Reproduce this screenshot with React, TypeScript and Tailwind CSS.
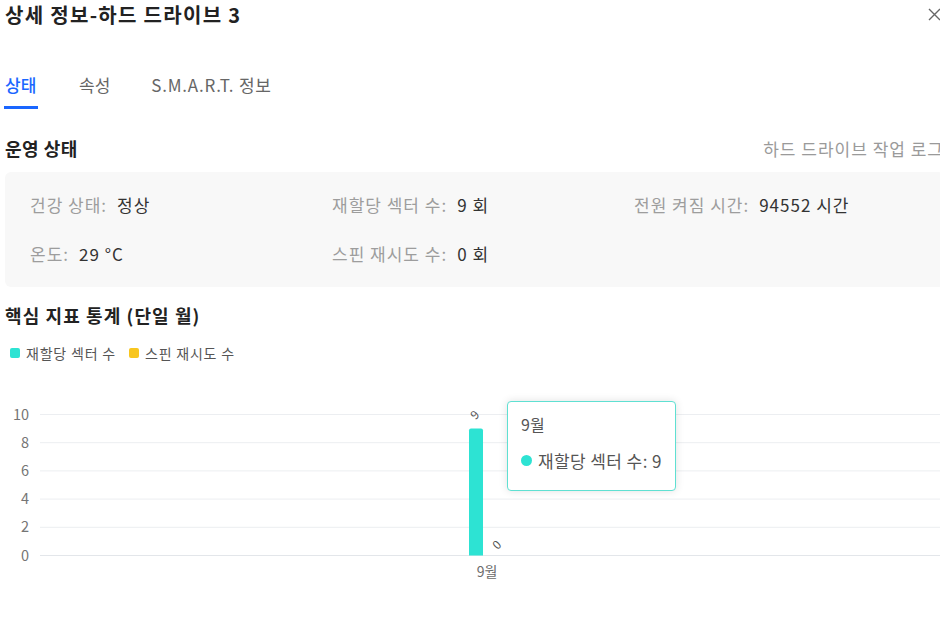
import React from "react";

const TEAL = "#2de3d3";
const YELLOW = "#f8c61f";

function Chart() {
  const x0 = 40;
  const x1 = 944;
  const yTop = 414.5;
  const step = 28.2;
  const ticks = [10, 8, 6, 4, 2, 0];
  const yOf = (v: number) => yTop + ((10 - v) / 2) * step;
  const base = yOf(0);
  const barTop = yOf(9);
  return (
    <svg width="944" height="200" viewBox="0 390 944 200" className="block">
      {ticks.map((t) => (
        <g key={t}>
          <line x1={x0} x2={x1} y1={yOf(t)} y2={yOf(t)} stroke={t === 0 ? "#e3e6ea" : "#eceef1"} strokeWidth="1" />
          <text x={29} y={yOf(t) + 5} textAnchor="end" fontSize="14.5" fill="#757575">
            {t}
          </text>
        </g>
      ))}
      <path
        d={`M469 ${base} L469 ${barTop + 2} Q469 ${barTop} 471 ${barTop} L481 ${barTop} Q483 ${barTop} 483 ${barTop + 2} L483 ${base} Z`}
        fill={TEAL}
      />
      <text x={475} y={419} fontSize="12" fill="#555" textAnchor="middle" transform="rotate(-45 475 415)">
        9
      </text>
      <text x={497} y={549} fontSize="12" fill="#555" textAnchor="middle" transform="rotate(-45 497 545)">
        0
      </text>
      <text x={487} y={577} fontSize="14" fill="#6b6b6b" textAnchor="middle">
        9월
      </text>
    </svg>
  );
}

function Item({ label, value }: { label: string; value: string }) {
  return (
    <div className="flex">
      <span className="text-[#9d9d9d]">{label}</span>
      <span className="ml-[10px] text-[#333]">{value}</span>
    </div>
  );
}

export default function App() {
  return (
    <div className="w-[940px] h-[630px] overflow-hidden bg-white font-['Noto_Sans_CJK_KR','Noto_Sans',sans-serif]">
      <div className="relative w-[944px] pl-[5px]">
        {/* Header */}
        <div className="flex h-[30px] items-center justify-between">
          <div className="text-[20px] font-bold tracking-[1.3px] text-[#222] leading-none">상세 정보-하드 드라이브 3</div>
          <svg width="13" height="13" viewBox="0 0 13 13" className="mr-[3px] -mt-[1px]">
            <path d="M1 1 L12 12 M12 1 L1 12" stroke="#666" strokeWidth="1.4" />
          </svg>
        </div>

        {/* Tabs */}
        <div className="mt-[46px] flex gap-[41px] text-[17px] leading-none">
          <div className="flex flex-col">
            <span className="text-[#1a66ff] font-medium">상태</span>
            <span className="mt-[13px] h-[3px] w-[34px] -ml-[1px] bg-[#1a66ff]" />
          </div>
          <span className="text-[#666]">속성</span>
          <span className="text-[#666] tracking-[0.8px]">S.M.A.R.T. 정보</span>
        </div>

        {/* Section header */}
        <div className="mt-[30px] flex items-center justify-between">
          <div className="text-[18px] font-bold tracking-[0.5px] text-[#222] leading-none">운영 상태</div>
          <div className="text-[17px] tracking-[1px] text-[#9a9a9a] leading-none">하드 드라이브 작업 로그</div>
        </div>

        {/* Status box */}
        <div className="mt-[15px] h-[115px] rounded-md bg-[#f8f8f8] pl-[25px] pt-[21px]">
          <div className="grid grid-cols-[302px_302px_302px] gap-y-[26px] text-[17px] tracking-[1px] leading-[23px]">
            <Item label="건강 상태:" value="정상" />
            <Item label="재할당 섹터 수:" value="9 회" />
            <Item label="전원 켜짐 시간:" value="94552 시간" />
            <Item label="온도:" value="29 °C" />
            <Item label="스핀 재시도 수:" value="0 회" />
            <div />
          </div>
        </div>

        {/* Metrics header */}
        <div className="mt-[19px] text-[18px] font-bold tracking-[1.1px] text-[#222] leading-none">핵심 지표 통계 (단일 월)</div>

        {/* Legend */}
        <div className="mt-[22px] flex items-center pl-[5px] text-[14px] tracking-[0.8px] text-[#555] leading-none">
          <span className="h-[10px] w-[10px] rounded-[2px]" style={{ background: TEAL }} />
          <span className="ml-[6px]">재할당 섹터 수</span>
          <span className="ml-[13px] h-[10px] w-[10px] rounded-[2px]" style={{ background: YELLOW }} />
          <span className="ml-[6px]">스핀 재시도 수</span>
        </div>
      </div>

      {/* Chart */}
      <div className="relative mt-[30px]">
        <Chart />
        <div className="absolute left-[507px] top-[11px] h-[90px] w-[169px] rounded-[4px] border border-[#5fe0d2] bg-white px-[13px] shadow-[0_0_8px_rgba(0,0,0,0.12)]">
          <div className="mt-[14px] text-[16px] leading-none text-[#555]">9월</div>
          <div className="mt-[20px] flex items-center text-[17px] tracking-[0.4px] leading-none text-[#555]">
            <span className="h-[11px] w-[11px] rounded-full" style={{ background: TEAL }} />
            <span className="ml-[6px]">재할당 섹터 수: 9</span>
          </div>
        </div>
      </div>
    </div>
  );
}
